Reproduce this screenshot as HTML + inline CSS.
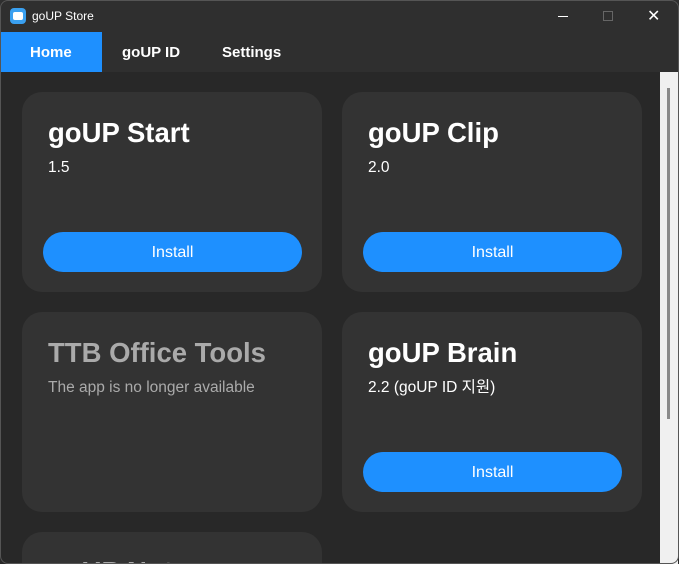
<!DOCTYPE html>
<html><head><style>
*{margin:0;padding:0;box-sizing:border-box}
body{width:679px;height:564px;background:#282828;font-family:"Liberation Sans","Noto Sans CJK KR",sans-serif;overflow:hidden;position:relative;color:#fff}
.win{position:absolute;inset:0;overflow:hidden;background:#282828}
.frame{position:absolute;inset:0;border:1px solid #555;border-radius:8px;z-index:10;pointer-events:none}
.title{position:absolute;left:0;top:0;width:100%;height:32px;background:#2f2f2f}
.title .ic{position:absolute;left:10px;top:8px;width:16px;height:16px;border-radius:4px;background:#3aa0f0}
.title .ic:after{content:"";position:absolute;left:3px;top:4px;width:10px;height:8px;background:#fff;border-radius:2px}
.title .t{position:absolute;left:32px;top:9px;font-size:12px;color:#fff}
.nav{position:absolute;left:0;top:32px;width:100%;height:40px;background:#2f2f2f}
.nav div{position:absolute;top:12px;font-size:15px;font-weight:bold}
.home{position:absolute;left:0;top:32px;width:102px;height:40px;background:#1e90ff}
.card{position:absolute;width:300px;height:200px;background:#333;border-radius:20px}
.card h1{position:absolute;left:26px;top:25px;font-size:27.5px;font-weight:bold;line-height:32px}
.card p{position:absolute;left:26px;top:67px;font-size:15.5px;line-height:18px}
.btn{position:absolute;left:21px;top:140px;width:259px;height:40px;background:#1e90ff;border-radius:20px;text-align:center;line-height:42px;font-size:16px}
.sb{position:absolute;left:660px;top:72px;width:18px;height:492px;background:#f0f0f0}
.sb div{position:absolute;left:7px;top:16px;width:3px;height:331px;background:#8a8a8a}
</style></head><body><div class="win">
<div class="title"><div class="ic"></div><div class="t">goUP Store</div>
<div style="position:absolute;left:558px;top:16px;width:10px;height:1px;background:#fff"></div>
<div style="position:absolute;left:603px;top:11px;width:10px;height:10px;border:1px solid #666"></div>
<div style="position:absolute;left:647px;top:6px;font-size:16px;color:#fff">✕</div>
</div>
<div class="nav"></div><div class="home"></div>
<div class="nav" style="background:none"><div style="left:30px">Home</div><div style="left:122px">goUP ID</div><div style="left:222px">Settings</div></div>
<div class="card" style="left:22px;top:92px"><h1>goUP Start</h1><p>1.5</p><div class="btn">Install</div></div>
<div class="card" style="left:342px;top:92px"><h1>goUP Clip</h1><p>2.0</p><div class="btn">Install</div></div>
<div class="card" style="left:22px;top:312px;color:#aaa"><h1>TTB Office Tools</h1><p>The app is no longer available</p></div>
<div class="card" style="left:342px;top:312px"><h1>goUP Brain</h1><p>2.2 (goUP ID 지원)</p><div class="btn">Install</div></div>
<div class="card" style="left:22px;top:532px"><h1 style="top:24px;color:#aaa">goUP Notes</h1></div>
<div class="sb"><div></div></div>
</div><div class="frame"></div></body></html>
